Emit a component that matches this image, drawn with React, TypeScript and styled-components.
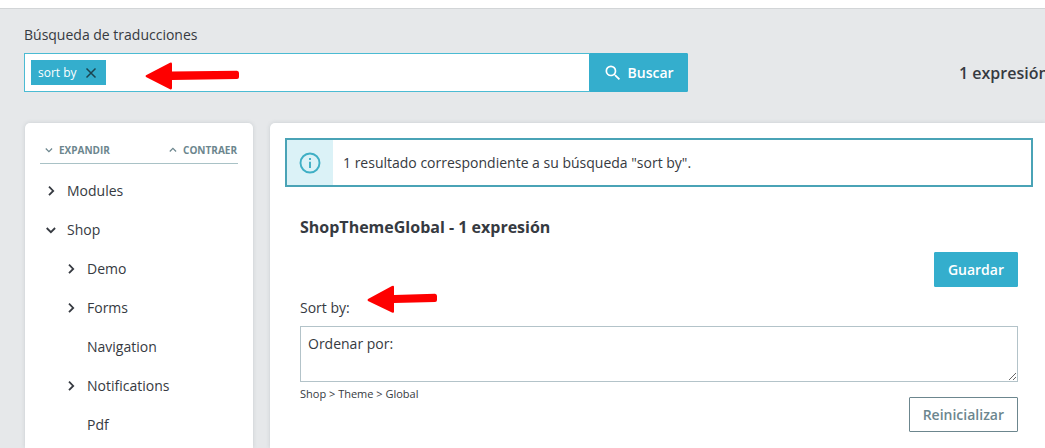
import React from "react";
import styled, { createGlobalStyle } from "styled-components";

const GlobalStyle = createGlobalStyle`
  *, *::before, *::after { box-sizing: border-box; }
  body {
    margin: 0;
    background: #e6e8ea;
    color: #363a41;
    font: 14px/20px "Open Sans", "Noto Sans", sans-serif;
  }
  button, input, textarea { font: inherit; color: inherit; }
  button { cursor: pointer; }
  h2, p, ul { margin: 0; padding: 0; }
  svg { display: block; flex: none; }
`;

const Page = styled.div`
  display: flex;
  flex-direction: column;
  min-height: 100vh;
`;

const TopBar = styled.header`
  height: 9px;
  background: #fff;
  border-bottom: 1px solid #d2d5d7;
`;

const SearchHeader = styled.section`
  display: flex;
  align-items: flex-end;
  justify-content: space-between;
  padding: 16px 0 0 24px;
`;

const SearchForm = styled.form`
  width: 65%;
`;

const SearchLabel = styled.label`
  display: block;
  margin-bottom: 8px;
`;

const SearchRow = styled.div`
  display: flex;
  height: 39px;
`;

const TagField = styled.div`
  position: relative;
  flex: 1;
  min-width: 0;
  display: flex;
  align-items: center;
  gap: 8px;
  padding: 0 6px;
  background: #fff;
  border: 1px solid #4bbbd3;
  border-right: 0;
`;

const Tag = styled.span`
  display: flex;
  align-items: center;
  gap: 7px;
  height: 25px;
  padding: 0 8px 0 7px;
  background: #34aecd;
  color: #fff;
  font-size: 12px;
`;

const TagRemove = styled.button`
  padding: 0;
  border: 0;
  background: none;
  color: #1c4450;
`;

const TagInput = styled.input`
  flex: 1;
  min-width: 0;
  border: 0;
  outline: 0;
  background: none;
`;

const Button = styled.button<{ $outline?: boolean }>`
  display: flex;
  align-items: center;
  gap: 5px;
  height: 35px;
  padding: 0 13px;
  border: 1px solid ${(p) => (p.$outline ? "#6c868e" : "#34aecd")};
  border-radius: 1px;
  background: ${(p) => (p.$outline ? "#fff" : "#34aecd")};
  color: ${(p) => (p.$outline ? "#6c868e" : "#fff")};
  font-weight: 600;
  white-space: nowrap;
`;

const SearchButton = styled(Button)`
  height: 39px;
  border-radius: 0 1px 1px 0;
`;

const Total = styled.p`
  width: 86px;
  overflow: hidden;
  font-size: 16px;
  line-height: 38px;
  font-weight: 600;
  white-space: nowrap;
`;

const Columns = styled.main`
  flex: 1;
  display: grid;
  grid-template-columns: 228px minmax(0, 1fr);
  gap: 17px;
  padding: 31px 0 0 25px;
`;

const Card = styled.section`
  background: #fff;
  border-radius: 5px 5px 0 0;
  box-shadow: 0 0 4px rgba(80, 100, 110, 0.2);
`;

const Sidebar = styled(Card)`
  padding: 15px 15px 0;
`;

const Panel = styled(Card)`
  border-radius: 5px 0 0 0;
  padding: 15px 12px 0 15px;
`;

const TreeActions = styled.div`
  display: flex;
  justify-content: space-between;
  height: 26px;
  margin-bottom: 7px;
  padding-bottom: 2px;
  border-bottom: 1px solid #a9c2c6;
`;

const TreeAction = styled.button`
  display: flex;
  align-items: center;
  gap: 4px;
  padding: 0 1px 0 3px;
  border: 0;
  background: none;
  color: #6c868e;
  font-size: 10px;
  font-weight: 700;
  text-transform: uppercase;
`;

const Tree = styled.ul`
  list-style: none;
`;

const TreeItem = styled.button<{ $level: number }>`
  display: flex;
  align-items: center;
  gap: 8px;
  width: 100%;
  height: 39px;
  padding: 0 0 0 ${(p) => 3 + p.$level * 20}px;
  border: 0;
  background: none;
  text-align: left;
`;

const IconSlot = styled.span`
  width: 16px;
  height: 16px;
`;

const Alert = styled.div`
  display: flex;
  height: 49px;
  border: 2px solid #4aa3b6;
`;

const AlertIcon = styled.div`
  display: flex;
  align-items: center;
  justify-content: center;
  width: 46px;
  background: #dbf2f7;
  color: #3fafc5;
`;

const AlertText = styled.p`
  align-self: center;
  padding-left: 10px;
`;

const Domain = styled.div`
  display: flex;
  flex-direction: column;
  padding: 28px 15px 15px;
`;

const DomainTitle = styled.h2`
  font-size: 16px;
  line-height: 24px;
  font-weight: 700;
`;

const Actions = styled.div<{ $top: number }>`
  display: flex;
  justify-content: flex-end;
  margin-top: ${(p) => p.$top}px;
`;

const FieldLabel = styled.label`
  position: relative;
  align-self: flex-start;
  margin: 11px 0 8px;
`;

const Translation = styled.textarea`
  display: block;
  width: 100%;
  height: 56px;
  padding: 7px;
  border: 1px solid #b3c3c9;
  border-radius: 0;
  outline: 0;
  resize: vertical;
`;

const FieldFooter = styled.div`
  display: flex;
  align-items: flex-start;
  justify-content: space-between;
`;

const Breadcrumb = styled.p`
  padding-top: 4px;
  font-size: 11px;
  line-height: 16px;
`;

const Pointer = styled.svg<{ $left: number; $top: number }>`
  position: absolute;
  left: ${(p) => p.$left}px;
  top: ${(p) => p.$top}px;
  pointer-events: none;
`;

type Direction = "right" | "down" | "up";

const chevrons: Record<Direction, string> = {
  right: "M6 3.700l4.200 4.200-4.200 4.200",
  down: "M3.700 6l4.200 4.200 4.200-4.200",
  up: "M3.700 10l4.200-4.200 4.200 4.200",
};

const Chevron = ({ to, size = 16, weight = 1.8 }: { to: Direction; size?: number; weight?: number }) => (
  <svg width={size} height={size} viewBox="0 0 16 16" fill="none" stroke="currentColor" strokeWidth={weight} aria-hidden="true">
    <path d={chevrons[to]} />
  </svg>
);

const nodes: { name: string; level: number; icon?: Direction }[] = [
  { name: "Modules", level: 0, icon: "right" },
  { name: "Shop", level: 0, icon: "down" },
  { name: "Demo", level: 1, icon: "right" },
  { name: "Forms", level: 1, icon: "right" },
  { name: "Navigation", level: 1 },
  { name: "Notifications", level: 1, icon: "right" },
  { name: "Pdf", level: 1 },
];

export default function App() {
  return (
    <Page>
      <GlobalStyle />
      <TopBar />
      <SearchHeader>
        <SearchForm onSubmit={(e) => e.preventDefault()}>
          <SearchLabel htmlFor="search">Búsqueda de traducciones</SearchLabel>
          <SearchRow>
            <TagField>
              <Tag>
                sort by
                <TagRemove type="button" aria-label="Eliminar sort by">
                  <svg width="14" height="14" viewBox="0 0 14 14" fill="none" stroke="currentColor" strokeWidth="1.5">
                    <path d="M2.5 2.5l9 9M11.5 2.5l-9 9" />
                  </svg>
                </TagRemove>
              </Tag>
              <TagInput id="search" type="text" />
              <Pointer $left={120} $top={8} width="95" height="28" viewBox="0 0 95 28" fill="#fe0000" aria-hidden="true">
                <path d="M1 13.2L25 .8Q27 0 27 2V9.5L92 8.8Q94 9 94 11V15Q94 17 92 17L27 18V26Q27 28 25 27.2L1 15Q0 14 1 13.2Z" />
              </Pointer>
            </TagField>
            <SearchButton type="submit">
              <svg width="20" height="20" viewBox="0 0 24 24" fill="currentColor" aria-hidden="true">
                <path d="M15.5 14h-.79l-.28-.27A6.47 6.47 0 0 0 16 9.5 6.5 6.5 0 1 0 9.5 16c1.61 0 3.09-.59 4.23-1.57l.27.28v.79l5 4.99L20.49 19l-4.99-5zm-6 0C7.01 14 5 11.99 5 9.5S7.01 5 9.5 5 14 7.01 14 9.5 11.99 14 9.5 14z" />
              </svg>
              Buscar
            </SearchButton>
          </SearchRow>
        </SearchForm>
        <Total>1 expresión</Total>
      </SearchHeader>

      <Columns>
        <Sidebar>
          <TreeActions>
            <TreeAction type="button">
              <Chevron to="down" size={12} weight={1.6} />
              Expandir
            </TreeAction>
            <TreeAction type="button">
              <Chevron to="up" size={12} weight={1.6} />
              Contraer
            </TreeAction>
          </TreeActions>
          <Tree>
            {nodes.map((node) => (
              <li key={node.name}>
                <TreeItem type="button" $level={node.level}>
                  <IconSlot>{node.icon && <Chevron to={node.icon} />}</IconSlot>
                  {node.name}
                </TreeItem>
              </li>
            ))}
          </Tree>
        </Sidebar>

        <Panel>
          <Alert role="status">
            <AlertIcon>
              <svg width="22" height="22" viewBox="0 0 22 22" fill="none" stroke="currentColor" strokeWidth="1.9" aria-hidden="true">
                <circle cx="11" cy="11" r="9.5" />
                <path d="M11 9.8V16M11 6v2" />
              </svg>
            </AlertIcon>
            <AlertText>1 resultado correspondiente a su búsqueda "sort by".</AlertText>
          </Alert>
          <Domain>
            <DomainTitle>ShopThemeGlobal - 1 expresión</DomainTitle>
            <Actions $top={13}>
              <Button type="button">Guardar</Button>
            </Actions>
            <FieldLabel htmlFor="translation">
              Sort by:
              <Pointer $left={67} $top={-13} width="71" height="29" viewBox="0 0 71 29" fill="#fe0000" aria-hidden="true">
                <path d="M1 14L25 1Q27 0 27 2V10L68 8.8Q70 9 70 11V15Q70 17 68 17L27 18V26.500Q27 28.500 25 27.500L1 16Q0 15 1 14Z" />
              </Pointer>
            </FieldLabel>
            <Translation id="translation" defaultValue="Ordenar por:" />
            <FieldFooter>
              <Breadcrumb>Shop &gt; Theme &gt; Global</Breadcrumb>
              <Actions $top={15}>
                <Button type="button" $outline>
                  Reinicializar
                </Button>
              </Actions>
            </FieldFooter>
          </Domain>
        </Panel>
      </Columns>
    </Page>
  );
}
